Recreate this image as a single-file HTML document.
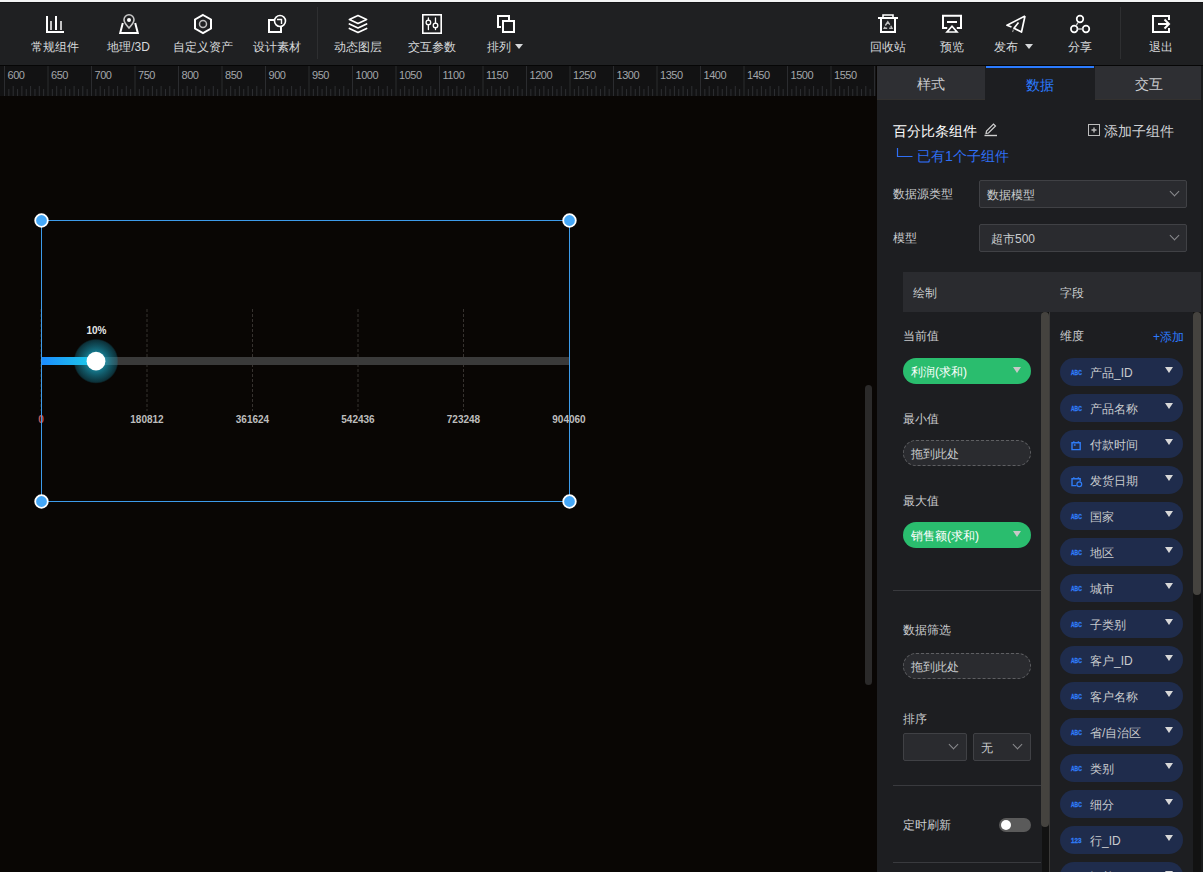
<!DOCTYPE html>
<html><head><meta charset="utf-8">
<style>
*{box-sizing:border-box;margin:0;padding:0}
html,body{width:1203px;height:872px;overflow:hidden;background:#090604;font-family:"Liberation Sans",sans-serif}
.a{position:absolute}
.t{position:absolute;white-space:nowrap;line-height:1}
#top{left:0;top:0;width:1203px;height:2px;background:#f2f4f4}
#tb{left:0;top:2px;width:1203px;height:63px;background:#1f2022;border-top:1px solid #141517}
#tbl{left:0;top:65px;width:1203px;height:1px;background:#060606}
.tl{font-size:12px;color:#d6d8da;top:41px;text-align:center;width:100px;margin-left:-50px}
.sep{width:1px;background:#2e2f31;top:7px;height:52px}
#ruler{left:0;top:66px;width:876px;height:30px;background:#121213;overflow:hidden}
#rgap{left:876px;top:66px;width:1px;height:806px;background:#090604}
#panel{left:877px;top:66px;width:326px;height:806px;background:#1d1e21}
.tab{top:66px;height:34px;background:#2e2f33;font-size:14px;color:#c9cbce;text-align:center;line-height:37px;border-bottom:1px solid #33312f}
</style></head><body>
<div class="a" id="top"></div>
<div class="a" id="tb"></div>
<div class="a" id="tbl"></div>

<!-- toolbar icons -->
<svg class="a" style="left:0;top:0" width="1203" height="65" fill="none" stroke="#fff" stroke-width="2">
  <!-- chart -->
  <path d="M47,16 V32 H64" stroke="#fff"/>
  <path d="M51,21 V30 M61,21 V30" stroke="#c4c4c4"/>
  <path d="M56,16 V30"/>
  <!-- map -->
  <path d="M122.8,23 L120.2,33 H137.8 L135.2,23" stroke="#fff"/>
  <path d="M129,28 C126,24.8 124,22.5 124,19.8 A5,5 0 0 1 134,19.8 C134,22.5 132,24.8 129,28 Z" stroke="#c8c8c8" stroke-width="1.6"/>
  <circle cx="129" cy="20" r="2" fill="#fff" stroke="none"/>
  <!-- hexagon -->
  <path d="M203,15 L211,19.5 V28.5 L203,33 L195,28.5 V19.5 Z"/>
  <circle cx="203" cy="24" r="3.5" stroke="#c0c0c0" stroke-width="1.5"/>
  <!-- design material -->
  <path d="M274,20 H269 V32 H281 V27"/>
  <circle cx="280" cy="21" r="5.5" stroke-width="1.6"/>
  <path d="M277,19.5 H281.5 V24" stroke-width="1.4"/>
  <!-- separators via divs -->
  <!-- layers -->
  <path d="M358,15.6 L366.6,19.5 L358,23.4 L349.4,19.5 Z" stroke-width="1.7" stroke-linejoin="round"/>
  <path d="M349.4,24 L358,28 L366.6,24" stroke-width="1.7" stroke-linejoin="round" stroke-linecap="round"/>
  <path d="M349.4,28.5 L358,32.5 L366.6,28.5" stroke-width="1.7" stroke-linejoin="round" stroke-linecap="round"/>
  <!-- sliders -->
  <rect x="422.8" y="14.8" width="18.4" height="18.4" stroke-width="1.6"/>
  <path d="M428.4,18 V20 M428.4,24.8 V29.5 M435.5,18 V23 M435.5,27.8 V29.5" stroke-width="1.3" stroke-linecap="round"/>
  <circle cx="428.4" cy="22.4" r="2.3" stroke-width="1.3"/>
  <circle cx="435.5" cy="25.4" r="2.3" stroke-width="1.3"/>
  <!-- arrange -->
  <path d="M501,27 H498 V16 H509 V20"/>
  <rect x="503" y="21" width="11" height="11"/>
  <!-- recycle -->
  <path d="M878,18 H898" />
  <path d="M883,17.5 V15 H893 V17.5" stroke-width="1.6"/>
  <path d="M881,19 V32 H895 V19"/>
  <path d="M885.3,25.5 L887.8,21.8 L889.8,24.6 M890.8,25.8 L892,28.2 H889.2 M887.2,28.2 H884.2 L885,26.8" stroke="#c0c0c0" stroke-width="1.4"/>
  <!-- preview -->
  <path d="M947.2,28 H943 V15.8 H961 V28 H956.8"/>
  <path d="M947,22 H957"/>
  <path d="M952,26.2 L947,32 H957 Z" stroke-width="1.7"/>
  <!-- publish -->
  <path d="M1025,16 L1007,25.3 L1011.5,27 M1018.5,22.5 L1014,28.3 L1021.5,32 L1025,16" stroke-width="1.7" stroke-linejoin="round"/>
  <path d="M1013.5,29.5 L1012.5,32" stroke="#999" stroke-width="1.2"/>
  <!-- share -->
  <circle cx="1080" cy="19" r="3.3" stroke-width="1.7"/>
  <circle cx="1074.2" cy="29" r="3.3" stroke-width="1.7"/>
  <circle cx="1086" cy="29" r="3.3" stroke-width="1.7"/>
  <path d="M1078,22.5 L1076,25.8 M1077.6,29 H1082.6" stroke="#c8c8c8" stroke-width="1.4"/>
  <!-- exit -->
  <path d="M1169,20 V16 H1153 V32 H1169 V28"/>
  <path d="M1158,24 H1168 M1164.5,19.5 L1169,24 L1164.5,28.5"/>
</svg>
<div class="a sep" style="left:317px"></div>
<div class="a sep" style="left:1120px"></div>

<div class="t tl" style="left:55px">常规组件</div>
<div class="t tl" style="left:128.5px">地理/3D</div>
<div class="t tl" style="left:203px">自定义资产</div>
<div class="t tl" style="left:277px">设计素材</div>
<div class="t tl" style="left:358px">动态图层</div>
<div class="t tl" style="left:432px">交互参数</div>
<div class="t tl" style="left:487px;margin-left:0;width:auto;text-align:left">排列</div><div class="a tri" style="left:514.5px;top:43.5px;border-left-width:4px;border-right-width:4px;border-top:5.5px solid #d6d8da"></div>
<div class="t tl" style="left:888px">回收站</div>
<div class="t tl" style="left:952px">预览</div>
<div class="t tl" style="left:993.5px;margin-left:0;width:auto;text-align:left">发布</div><div class="a tri" style="left:1024.5px;top:43.5px;border-left-width:4px;border-right-width:4px;border-top:5.5px solid #d6d8da"></div>
<div class="t tl" style="left:1080px">分享</div>
<div class="t tl" style="left:1161px">退出</div>

<!-- ruler -->
<div class="a" id="ruler"><svg width="876" height="30" style="position:absolute;left:0;top:0"><path d="M4.50,0V30M48.00,0V30M91.50,0V30M135.00,0V30M178.50,0V30M222.00,0V30M265.50,0V30M309.00,0V30M352.50,0V30M396.00,0V30M439.50,0V30M483.00,0V30M526.50,0V30M570.00,0V30M613.50,0V30M657.00,0V30M700.50,0V30M744.00,0V30M787.50,0V30M831.00,0V30M874.50,0V30" stroke="#2b2c2f" stroke-width="1"/><path d="M8.85,23V30M13.20,20V30M17.55,23V30M21.90,20V30M26.25,23V30M30.60,20V30M34.95,23V30M39.30,20V30M43.65,23V30M52.35,23V30M56.70,20V30M61.05,23V30M65.40,20V30M69.75,23V30M74.10,20V30M78.45,23V30M82.80,20V30M87.15,23V30M95.85,23V30M100.20,20V30M104.55,23V30M108.90,20V30M113.25,23V30M117.60,20V30M121.95,23V30M126.30,20V30M130.65,23V30M139.35,23V30M143.70,20V30M148.05,23V30M152.40,20V30M156.75,23V30M161.10,20V30M165.45,23V30M169.80,20V30M174.15,23V30M182.85,23V30M187.20,20V30M191.55,23V30M195.90,20V30M200.25,23V30M204.60,20V30M208.95,23V30M213.30,20V30M217.65,23V30M226.35,23V30M230.70,20V30M235.05,23V30M239.40,20V30M243.75,23V30M248.10,20V30M252.45,23V30M256.80,20V30M261.15,23V30M269.85,23V30M274.20,20V30M278.55,23V30M282.90,20V30M287.25,23V30M291.60,20V30M295.95,23V30M300.30,20V30M304.65,23V30M313.35,23V30M317.70,20V30M322.05,23V30M326.40,20V30M330.75,23V30M335.10,20V30M339.45,23V30M343.80,20V30M348.15,23V30M356.85,23V30M361.20,20V30M365.55,23V30M369.90,20V30M374.25,23V30M378.60,20V30M382.95,23V30M387.30,20V30M391.65,23V30M400.35,23V30M404.70,20V30M409.05,23V30M413.40,20V30M417.75,23V30M422.10,20V30M426.45,23V30M430.80,20V30M435.15,23V30M443.85,23V30M448.20,20V30M452.55,23V30M456.90,20V30M461.25,23V30M465.60,20V30M469.95,23V30M474.30,20V30M478.65,23V30M487.35,23V30M491.70,20V30M496.05,23V30M500.40,20V30M504.75,23V30M509.10,20V30M513.45,23V30M517.80,20V30M522.15,23V30M530.85,23V30M535.20,20V30M539.55,23V30M543.90,20V30M548.25,23V30M552.60,20V30M556.95,23V30M561.30,20V30M565.65,23V30M574.35,23V30M578.70,20V30M583.05,23V30M587.40,20V30M591.75,23V30M596.10,20V30M600.45,23V30M604.80,20V30M609.15,23V30M617.85,23V30M622.20,20V30M626.55,23V30M630.90,20V30M635.25,23V30M639.60,20V30M643.95,23V30M648.30,20V30M652.65,23V30M661.35,23V30M665.70,20V30M670.05,23V30M674.40,20V30M678.75,23V30M683.10,20V30M687.45,23V30M691.80,20V30M696.15,23V30M704.85,23V30M709.20,20V30M713.55,23V30M717.90,20V30M722.25,23V30M726.60,20V30M730.95,23V30M735.30,20V30M739.65,23V30M748.35,23V30M752.70,20V30M757.05,23V30M761.40,20V30M765.75,23V30M770.10,20V30M774.45,23V30M778.80,20V30M783.15,23V30M791.85,23V30M796.20,20V30M800.55,23V30M804.90,20V30M809.25,23V30M813.60,20V30M817.95,23V30M822.30,20V30M826.65,23V30M835.35,23V30M839.70,20V30M844.05,23V30M848.40,20V30M852.75,23V30M857.10,20V30M861.45,23V30M865.80,20V30M870.15,23V30" stroke="#2e2f32" stroke-width="1"/><g fill="#a3a6aa" font-size="11" font-family="Liberation Sans" letter-spacing="-0.45"><text x="7.50" y="13">600</text><text x="51.00" y="13">650</text><text x="94.50" y="13">700</text><text x="138.00" y="13">750</text><text x="181.50" y="13">800</text><text x="225.00" y="13">850</text><text x="268.50" y="13">900</text><text x="312.00" y="13">950</text><text x="355.50" y="13">1000</text><text x="399.00" y="13">1050</text><text x="442.50" y="13">1100</text><text x="486.00" y="13">1150</text><text x="529.50" y="13">1200</text><text x="573.00" y="13">1250</text><text x="616.50" y="13">1300</text><text x="660.00" y="13">1350</text><text x="703.50" y="13">1400</text><text x="747.00" y="13">1450</text><text x="790.50" y="13">1500</text><text x="834.00" y="13">1550</text></g></svg></div>
<div class="a" id="rgap"></div>


<!-- canvas -->
<svg class="a" style="left:0;top:96px" width="874" height="776">
  <defs>
    <linearGradient id="bg1" x1="0" x2="1" y1="0" y2="0"><stop offset="0" stop-color="#1c8bff"/><stop offset="1" stop-color="#1ecfe6"/></linearGradient>
    <radialGradient id="glow" cx="0.5" cy="0.5" r="0.5"><stop offset="0" stop-color="#20c8e8" stop-opacity="0.75"/><stop offset="0.45" stop-color="#1cb4d4" stop-opacity="0.62"/><stop offset="0.8" stop-color="#1696b4" stop-opacity="0.42"/><stop offset="0.93" stop-color="#138aa8" stop-opacity="0.33"/><stop offset="1" stop-color="#138aa8" stop-opacity="0"/></radialGradient>
  </defs>
  <g transform="translate(0,-96)">
  <!-- dashed grid lines -->
  <path d="M147,309V411M252.5,309V411M358,309V411M463.5,309V411" stroke="#36322f" stroke-width="1" stroke-dasharray="3,2"/>
  <path d="M41,309V411" stroke="#36322f" stroke-width="1" stroke-dasharray="3,2"/>
  <rect x="41" y="357" width="528" height="8" fill="#3a3a3a"/>
  <circle cx="96" cy="361.2" r="22.5" fill="url(#glow)"/>
  <rect x="41" y="357" width="55" height="8" fill="url(#bg1)"/>
  <circle cx="96" cy="361.2" r="9.4" fill="#fff"/>
  <g font-family="Liberation Sans" font-weight="bold" font-size="10" text-anchor="middle">
    <text x="96.5" y="333.5" fill="#e6e6e6">10%</text>
    <text x="41" y="423" fill="#c85a5a">0</text>
    <text x="147" y="423" fill="#bdbdbd">180812</text>
    <text x="252.5" y="423" fill="#bdbdbd">361624</text>
    <text x="358" y="423" fill="#bdbdbd">542436</text>
    <text x="463.5" y="423" fill="#bdbdbd">723248</text>
    <text x="569" y="423" fill="#bdbdbd">904060</text>
  </g>
  <!-- selection -->
  <rect x="41.5" y="220.5" width="528" height="281" fill="none" stroke="#3d9bea" stroke-width="1"/>
  <g fill="#45a7f7" stroke="#fff" stroke-width="1.8">
    <circle cx="41.5" cy="220.5" r="6.3"/>
    <circle cx="569.5" cy="220.5" r="6.3"/>
    <circle cx="41.5" cy="501.5" r="6.3"/>
    <circle cx="569.5" cy="501.5" r="6.3"/>
  </g>
  <!-- scrollbar -->
  <rect x="865" y="385" width="7" height="300" rx="3.5" fill="#2b2a2a"/>
  </g>
</svg>

<!-- panel -->
<div class="a" id="panel"></div>
<div class="a tab" style="left:877px;width:108px">样式</div>
<div class="a tab" style="left:986px;width:108px;background:#1d1e21;color:#2b7bff;border-top:2px solid #2b7bff;border-bottom:none;line-height:34px">数据</div>
<div class="a tab" style="left:1095px;width:108px">交互</div>


<style>
.pl{font-size:12px;color:#c9cbce}
.sel{position:absolute;background:#2a2b2f;border:1px solid #404145;border-radius:2px;height:28px}
.chev{position:absolute;width:7px;height:7px;border-right:1px solid #8a8b8e;border-bottom:1px solid #8a8b8e;transform:rotate(45deg)}
.gp{position:absolute;left:903px;width:128px;height:26px;border-radius:13px;background:#2abd6e}
.gpt{left:8px;top:8px;font-size:12px;color:#fff;font-weight:500}
.tri{width:0;height:0;border-left:4px solid transparent;border-right:4px solid transparent;border-top:6px solid #c8c8c8}
.gp .tri{left:110px;top:9px}
.dsh{position:absolute;left:903px;width:128px;height:26px;border-radius:13px;background:#2a2b2f;border:1px dashed #5e5f62}
.dsh .t{left:7px;top:7px;font-size:12px;color:#c9cbce}
.dp{left:1060px;width:123px;height:28px;border-radius:14px;background:#1f2c4c}
.dpt{left:30px;top:9px;font-size:12px;color:#c9cbce}
.dp .tri{left:105px;top:9px;border-top-color:#d8d8d8}
.abc{font-size:8px;font-weight:bold;color:#2f7cf6;transform:scaleX(0.62);transform-origin:0 0;-webkit-text-stroke:0.35px #2f7cf6}
.hsep{position:absolute;left:893px;width:148px;height:1px;background:#393a3e}
</style>
<div class="t" style="left:893px;top:124px;font-size:14px;color:#fff">百分比条组件</div>
<svg class="a" style="left:982px;top:121px" width="18" height="18" fill="none" stroke="#d0d0d0" stroke-width="1.2">
  <path d="M2.5,14.5H15" stroke-width="1.4"/>
  <path d="M4,12.5 L4.5,10 L11.5,3 L13.5,5 L6.5,12 Z"/>
</svg>
<svg class="a" style="left:1087px;top:123px" width="14" height="14" fill="none">
  <rect x="1.5" y="1.5" width="11" height="11" stroke="#bdbdbd" stroke-width="1"/>
  <path d="M7,4.5V9.5M4.5,7H9.5" stroke="#bdbdbd" stroke-width="1.4"/>
</svg>
<div class="t" style="left:1104px;top:124px;font-size:14px;color:#cfd1d4">添加子组件</div>
<svg class="a" style="left:893px;top:145px" width="22" height="14" fill="none" stroke="#2f6ff5" stroke-width="1.2"><path d="M4.5,3V11.5H19.5"/></svg>
<div class="t" style="left:917px;top:149px;font-size:14px;color:#2f6ff5">已有1个子组件</div>

<div class="t pl" style="left:893px;top:188px">数据源类型</div>
<div class="sel" style="left:979px;top:180px;width:208px"><div class="t" style="left:7px;top:8px;font-size:12px;color:#c9cbce">数据模型</div><div class="chev" style="left:191px;top:6.5px"></div></div>
<div class="t pl" style="left:893px;top:232px">模型</div>
<div class="sel" style="left:979px;top:224px;width:208px"><div class="t" style="left:11px;top:8px;font-size:12px;color:#c9cbce">超市500</div><div class="chev" style="left:191px;top:6.5px"></div></div>

<div class="a" style="left:903px;top:272px;width:298px;height:40px;background:#2a2b2f"></div>
<div class="t pl" style="left:913px;top:287px">绘制</div>
<div class="t pl" style="left:1060px;top:287px">字段</div>

<!-- left column scroll -->
<div class="a" style="left:1042px;top:312px;width:7px;height:560px;background:#121212"></div>
<div class="a" style="left:1041px;top:312px;width:8px;height:515px;border-radius:4px;background:#45433f"></div>
<div class="a" style="left:1049px;top:312px;width:1px;height:560px;background:#3b3a39"></div>
<!-- right column scroll -->
<div class="a" style="left:1193px;top:312px;width:8px;height:560px;background:#121212"></div>
<div class="a" style="left:1193px;top:312px;width:8px;height:283px;border-radius:4px;background:#45433f"></div>
<div class="a" style="left:1201px;top:66px;width:2px;height:806px;background:#1a1b1d"></div>

<div class="t pl" style="left:903px;top:330px">当前值</div>
<div class="gp" style="top:358px"><div class="t gpt">利润(求和)</div><div class="a tri"></div></div>
<div class="t pl" style="left:903px;top:413px">最小值</div>
<div class="dsh" style="top:440px"><div class="t">拖到此处</div></div>
<div class="t pl" style="left:903px;top:495px">最大值</div>
<div class="gp" style="top:522px"><div class="t gpt">销售额(求和)</div><div class="a tri"></div></div>
<div class="hsep" style="top:590px"></div>
<div class="t pl" style="left:903px;top:624px">数据筛选</div>
<div class="dsh" style="top:653px"><div class="t">拖到此处</div></div>
<div class="t pl" style="left:903px;top:713px">排序</div>
<div class="sel" style="left:903px;top:733px;width:64px"><div class="chev" style="left:46px;top:6.5px"></div></div>
<div class="sel" style="left:973px;top:733px;width:58px"><div class="t" style="left:7px;top:8px;font-size:12px;color:#c9cbce">无</div><div class="chev" style="left:40px;top:6.5px"></div></div>
<div class="hsep" style="top:785px"></div>
<div class="t pl" style="left:903px;top:819px">定时刷新</div>
<div class="a" style="left:999px;top:818px;width:32px;height:14px;border-radius:7px;background:#5a5a5a"></div>
<div class="a" style="left:1000.6px;top:819.8px;width:10.4px;height:10.4px;border-radius:50%;background:#fff"></div>
<div class="hsep" style="top:862px"></div>

<div class="t pl" style="left:1060px;top:330px">维度</div>
<div class="t" style="left:1153px;top:331px;font-size:12px;color:#2b7bff">+添加</div>
<div class="a dp" style="top:358px"><div class="t abc" style="left:10.7px;top:11px">ABC</div><div class="t dpt">产品_ID</div><div class="a tri"></div></div>
<div class="a dp" style="top:394px"><div class="t abc" style="left:10.7px;top:11px">ABC</div><div class="t dpt">产品名称</div><div class="a tri"></div></div>
<div class="a dp" style="top:430px"><svg class="a" style="left:10px;top:9px" width="12" height="12" fill="none" stroke="#2f7cf6" stroke-width="1.4"><path d="M2,3.8H10.2V10.6H2Z M3.8,2.2V3.8 M8.4,2.2V3.8 M3.8,6H5.6" /></svg><div class="t dpt">付款时间</div><div class="a tri"></div></div>
<div class="a dp" style="top:466px"><svg class="a" style="left:10px;top:9px" width="13" height="13" fill="none" stroke="#2f7cf6" stroke-width="1.4"><path d="M6.5,10.6H2V3.8H10.2V6.5 M3.8,2.2V3.8 M8.4,2.2V3.8"/><circle cx="9.3" cy="9.3" r="2.4" stroke-width="1.2"/></svg><div class="t dpt">发货日期</div><div class="a tri"></div></div>
<div class="a dp" style="top:502px"><div class="t abc" style="left:10.7px;top:11px">ABC</div><div class="t dpt">国家</div><div class="a tri"></div></div>
<div class="a dp" style="top:538px"><div class="t abc" style="left:10.7px;top:11px">ABC</div><div class="t dpt">地区</div><div class="a tri"></div></div>
<div class="a dp" style="top:574px"><div class="t abc" style="left:10.7px;top:11px">ABC</div><div class="t dpt">城市</div><div class="a tri"></div></div>
<div class="a dp" style="top:610px"><div class="t abc" style="left:10.7px;top:11px">ABC</div><div class="t dpt">子类别</div><div class="a tri"></div></div>
<div class="a dp" style="top:646px"><div class="t abc" style="left:10.7px;top:11px">ABC</div><div class="t dpt">客户_ID</div><div class="a tri"></div></div>
<div class="a dp" style="top:682px"><div class="t abc" style="left:10.7px;top:11px">ABC</div><div class="t dpt">客户名称</div><div class="a tri"></div></div>
<div class="a dp" style="top:718px"><div class="t abc" style="left:10.7px;top:11px">ABC</div><div class="t dpt">省/自治区</div><div class="a tri"></div></div>
<div class="a dp" style="top:754px"><div class="t abc" style="left:10.7px;top:11px">ABC</div><div class="t dpt">类别</div><div class="a tri"></div></div>
<div class="a dp" style="top:790px"><div class="t abc" style="left:10.7px;top:11px">ABC</div><div class="t dpt">细分</div><div class="a tri"></div></div>
<div class="a dp" style="top:826px"><div class="t abc" style="left:10.8px;top:11px;transform:scaleX(0.79)">123</div><div class="t dpt">行_ID</div><div class="a tri"></div></div>
<div class="a dp" style="top:862px"><div class="t abc" style="left:10.7px;top:11px">ABC</div><div class="t dpt">订单_ID</div><div class="a tri"></div></div>
</body></html>
